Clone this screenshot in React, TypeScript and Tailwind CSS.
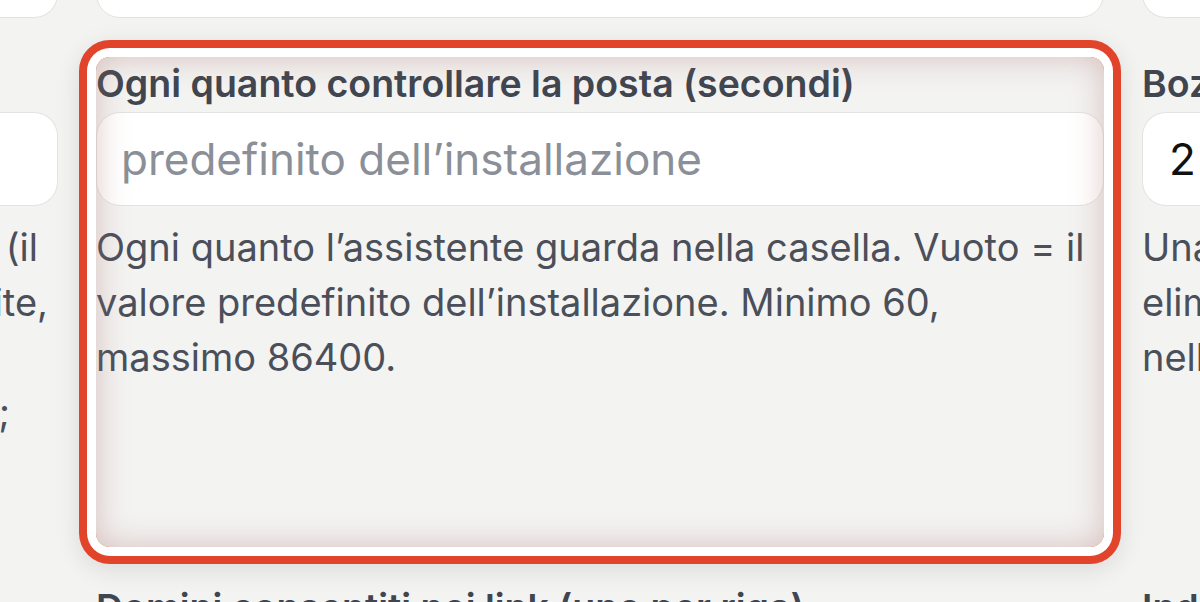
const font = { fontFamily: 'Inter, "Noto Sans", sans-serif' }

function TopInputs() {
  return (
    <div className="flex h-[18px] gap-[38px]">
      <div className="-mt-[60px] h-[78px] w-[58px] shrink-0 rounded-br-[24px] border border-l-0 border-[#e3e3e1] bg-white" />
      <div className="-mt-[60px] h-[78px] w-[1008px] shrink-0 rounded-b-[24px] border border-[#e3e3e1] bg-white" />
      <div className="-mt-[60px] h-[78px] flex-1 rounded-bl-[24px] border border-r-0 border-[#e3e3e1] bg-white" />
    </div>
  )
}

function ClippedLine({ text, pad }: { text: string; pad: string }) {
  return (
    <div className={`flex h-[55px] justify-end overflow-hidden whitespace-nowrap ${pad}`}>
      <span>{text}</span>
    </div>
  )
}

export default function App() {
  return (
    <div className="h-[602px] w-[1200px] overflow-hidden bg-[#f3f3f2] text-[#3e4350]" style={font}>
      <TopInputs />
      <div className="mt-[39px] flex gap-[38px]">
        {/* left column, mostly off screen */}
        <div className="w-[58px] shrink-0">
          <div className="h-[55px]" />
          <div className="h-[94px] rounded-r-[24px] border border-l-0 border-[#e3e3e1] bg-white" />
          <div className="mt-[14px] text-[38px] leading-[55px] text-[#4a4f5a]">
            <ClippedLine text="Quanti messaggi leggere a ogni giro (il" pad="pr-[20px]" />
            <ClippedLine text="resto resta nella casella finché non finite," pad="pr-[10px]" />
            <ClippedLine text="al prossimo controllo" pad="pr-[80px]" />
            <ClippedLine text="consigliato tra 10 e 50;" pad="pr-[48px]" />
          </div>
        </div>

        {/* highlighted field */}
        <div className="relative h-[490px] w-[1008px] shrink-0 pt-[4px]">
          <label className="block whitespace-nowrap text-[37.5px] font-semibold leading-[46px] text-[#40454f]">
            Ogni quanto controllare la posta (secondi)
          </label>
          <input
            type="text"
            placeholder="predefinito dell’installazione"
            className="mt-[5px] block h-[94px] w-full rounded-[24px] border border-[#e3e3e1] bg-white px-[24px] text-[44px] text-[#111] outline-none placeholder:text-[#8b8f97]"
          />
          <p className="mt-[14px] text-[38px] leading-[55px] text-[#4a4f5a]">
            Ogni quanto l’assistente guarda nella casella. Vuoto = il valore predefinito dell’installazione.
            Minimo 60, massimo 86400.
          </p>
          <div className="pointer-events-none absolute inset-0 rounded-[14px] shadow-[inset_0_0_32px_rgba(170,115,105,0.4),0_0_0_9px_#ffffff,0_0_0_17px_#e1442b,0_6px_24px_17px_rgba(0,0,0,0.10)]" />
        </div>

        {/* right column, mostly off screen */}
        <div className="min-w-0 flex-1 whitespace-nowrap">
          <div className="pt-[4px] text-[37.5px] font-semibold leading-[46px] text-[#40454f]">Bozze da tenere</div>
          <div className="mt-[5px] flex h-[94px] items-center rounded-l-[24px] border border-r-0 border-[#e3e3e1] bg-white px-[26px] text-[44px] text-[#111]">
            2
          </div>
          <div className="mt-[14px] text-[38px] leading-[55px] text-[#4a4f5a]">
            <div>Una bozza non inviata</div>
            <div>eliminata dopo</div>
            <div>nella cartella</div>
          </div>
        </div>
      </div>

      <div className="mt-[38px] flex gap-[38px] whitespace-nowrap text-[37.5px] font-semibold leading-[46px] text-[#40454f]">
        <div className="w-[58px] shrink-0" />
        <div className="w-[1008px] shrink-0">Domini consentiti nei link (uno per riga)</div>
        <div className="flex-1">Indirizzi</div>
      </div>
    </div>
  )
}
